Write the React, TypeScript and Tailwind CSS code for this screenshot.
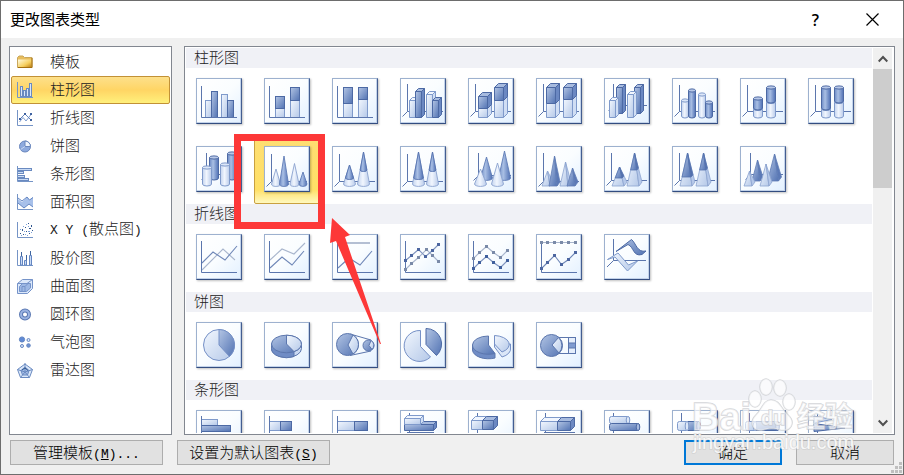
import { useState } from "react";
import type { ReactNode } from "react";

const LINE = "#5b76ad";
const DARK_LINE = "#4c69a4";
const GRAY = "#a9b6cd";

const fillOf = (dark?: boolean) => (dark ? "url(#dark)" : "url(#light)");
const strokeOf = (dark?: boolean) => (dark ? DARK_LINE : "#7f9acb");

// Shared gradients, referenced by every chart thumbnail
const Gradients = () => (
  <svg className="absolute h-0 w-0" aria-hidden="true">
    <defs>
      <linearGradient id="light" x1="0" y1="0" x2="1" y2="1">
        <stop offset="0" stopColor="#f2f7fe" />
        <stop offset="1" stopColor="#b4c8e8" />
      </linearGradient>
      <linearGradient id="dark" x1="0" y1="0" x2="1" y2="1">
        <stop offset="0" stopColor="#b3c5e4" />
        <stop offset="1" stopColor="#5273b3" />
      </linearGradient>
      <linearGradient id="lightRound" x1="0" y1="0" x2="1" y2="0">
        <stop offset="0" stopColor="#c3d3ee" />
        <stop offset="0.45" stopColor="#f1f6fe" />
        <stop offset="1" stopColor="#b9cbea" />
      </linearGradient>
      <linearGradient id="darkRound" x1="0" y1="0" x2="1" y2="0">
        <stop offset="0" stopColor="#6c8ac4" />
        <stop offset="0.4" stopColor="#a9bfe4" />
        <stop offset="1" stopColor="#4f70b4" />
      </linearGradient>
      <linearGradient id="folder" x1="0" y1="0" x2="1" y2="1">
        <stop offset="0" stopColor="#fffbe0" />
        <stop offset="0.6" stopColor="#f6cf5e" />
        <stop offset="1" stopColor="#b97a12" />
      </linearGradient>
    </defs>
  </svg>
);

const Axis = ({ top = 8, base = 39.5 }) => (
  <path d={`M5.5 ${top}V${base}H41`} stroke={LINE} fill="none" />
);

const Axis3D = ({ x = 7.5, top = 6, y = 33.5 }) => (
  <path
    d={`M${x} ${top}V${y}H43M${x} ${y}L${x - 5} ${y + 5}`}
    stroke={LINE}
    fill="none"
  />
);

type ShapeProps = {
  x: number;
  y: number;
  w: number;
  b?: number; // bottom edge
  dark?: boolean;
  split?: number;
};

const Bar = ({ x, y, w, b = 39.5, dark }: ShapeProps) => (
  <rect x={x} y={y} width={w} height={b - y} fill={fillOf(dark)} stroke={strokeOf(dark)} />
);

const Box = ({ x, y, w, b = 39.5, dark, split, d = 3 }: ShapeProps & { d?: number }) => {
  const r = x + w;
  if (split) {
    return (
      <>
        <Box x={x} y={split} w={w} b={b} d={d} />
        <Box x={x} y={y} w={w} b={split} d={d} dark />
      </>
    );
  }
  return (
    <g stroke={strokeOf(dark)} strokeLinejoin="round">
      <path d={`M${r} ${y}l${d} ${-d}V${b - d}L${r} ${b}z`} fill={dark ? "#6b88c2" : "#d0def4"} />
      <path d={`M${x} ${y}l${d} ${-d}h${w}l${-d} ${d}z`} fill={dark ? "#a7bbdf" : "#f1f6fe"} />
      <rect x={x} y={y} width={w} height={b - y} fill={fillOf(dark)} />
    </g>
  );
};

const Cylinder = ({ x, y, w, b = 38, dark, split }: ShapeProps) => {
  const r = w / 2;
  if (split) {
    return (
      <>
        <Cylinder x={x} y={split} w={w} b={b} />
        <Cylinder x={x} y={y} w={w} b={split - 1} dark />
      </>
    );
  }
  return (
    <g stroke={strokeOf(dark)}>
      <path
        d={`M${x} ${y}V${b}A${r} 2 0 0 0 ${x + w} ${b}V${y}`}
        fill={dark ? "url(#darkRound)" : "url(#lightRound)"}
      />
      <ellipse cx={x + r} cy={y} rx={r} ry="1.6" fill={dark ? "#b7c8e8" : "#dce7f8"} />
    </g>
  );
};

// x is the centre of the cone, w its width at the base
const Cone = ({ x, y, w, b = 38, dark, split }: ShapeProps) => {
  const r = w / 2;
  const s = split ? ((split - y) / (b - y)) * r : 0;
  return (
    <g stroke={dark ? "#5f7cb5" : "#8ba3cf"} strokeWidth="0.9" strokeLinejoin="round">
      <path
        d={`M${x} ${y}L${x - r} ${b}A${r} 2.4 0 0 0 ${x + r} ${b}z`}
        fill={dark ? "url(#darkRound)" : "url(#lightRound)"}
      />
      {split && (
        <path
          d={`M${x} ${y}L${x - s} ${split}A${s} 1.5 0 0 0 ${x + s} ${split}z`}
          fill="url(#darkRound)"
          stroke="#5673af"
        />
      )}
    </g>
  );
};

const Pyramid = ({ x, y, w, b = 40, dark, split }: ShapeProps) => {
  const r = w / 2;
  const s = split ? ((split - y) / (b - y)) * r : 0;
  return (
    <g stroke={dark ? "#5f7cb5" : "#8ba3cf"} strokeWidth="0.8" strokeLinejoin="round">
      <path d={`M${x} ${y}L${x - r} ${b}H${x + r - 3}z`} fill={fillOf(dark)} />
      <path d={`M${x} ${y}L${x + r - 3} ${b}L${x + r} ${b - 4}z`} fill={dark ? "#5b79b6" : "#b5c8e9"} />
      {split && (
        <g stroke="#5673af">
          <path d={`M${x} ${y}L${x - s} ${split}H${x + s * 0.6}z`} fill="url(#dark)" />
          <path d={`M${x} ${y}L${x + s * 0.6} ${split}L${x + s} ${split - 2}z`} fill="#5370ad" />
        </g>
      )}
    </g>
  );
};

const Trend = ({ points, color, marks }: { points: number[][]; color: string; marks?: string }) => (
  <>
    <polyline points={points.join(" ")} fill="none" stroke={color} strokeWidth="1.1" />
    {marks &&
      points.map(([x, y]) => (
        <rect key={x} x={x - 1.5} y={y - 1.5} width="3" height="3" fill={marks} />
      ))}
  </>
);

const Tube = ({ x, y, w, h, dark }: { x: number; y: number; w: number; h: number; dark?: boolean }) => (
  <g stroke={strokeOf(dark)}>
    <rect x={x} y={y} width={w} height={h} rx="2" fill={fillOf(dark)} />
    <ellipse cx={x + w - 1.5} cy={y + h / 2} rx="1.8" ry={h / 2} fill={dark ? "#a7bbe0" : "#dce7f8"} />
  </g>
);

type Chart = { name: string; art: ReactNode };

const columnCharts: Chart[] = [
  {
    name: "簇状柱形图",
    art: (
      <>
        <Bar x={9.5} y={22.5} w={6} />
        <Bar x={25.5} y={16.5} w={6} />
        <Bar x={15.5} y={13.5} w={6} dark />
        <Bar x={31.5} y={22.5} w={6} dark />
        <Axis />
      </>
    ),
  },
  {
    name: "堆积柱形图",
    art: (
      <>
        <Bar x={11.5} y={30.5} w={9} />
        <Bar x={11.5} y={18.5} w={9} b={30.5} dark />
        <Bar x={26.5} y={22.5} w={9} />
        <Bar x={26.5} y={9.5} w={9} b={22.5} dark />
        <Axis />
      </>
    ),
  },
  {
    name: "百分比堆积柱形图",
    art: (
      <>
        <Bar x={11.5} y={25.5} w={9} />
        <Bar x={11.5} y={9.5} w={9} b={25.5} dark />
        <Bar x={26.5} y={21.5} w={9} />
        <Bar x={26.5} y={9.5} w={9} b={21.5} dark />
        <Axis />
      </>
    ),
  },
  {
    name: "三维簇状柱形图",
    art: (
      <>
        <Axis3D />
        <Box x={9.5} y={22.5} w={6} />
        <Box x={15.5} y={13.5} w={6} dark />
        <Box x={26.5} y={16.5} w={6} />
        <Box x={32.5} y={22.5} w={6} dark />
      </>
    ),
  },
  {
    name: "三维堆积柱形图",
    art: (
      <>
        <Axis3D />
        <Box x={10.5} y={18.5} w={9} split={30.5} d={4} />
        <Box x={26.5} y={9.5} w={9} split={22.5} d={4} />
      </>
    ),
  },
  {
    name: "三维百分比堆积柱形图",
    art: (
      <>
        <Axis3D />
        <Box x={10.5} y={9.5} w={9} split={25.5} d={4} />
        <Box x={27.5} y={9.5} w={9} split={21.5} d={4} />
      </>
    ),
  },
  {
    name: "三维柱形图",
    art: (
      <>
        <Axis3D x={9.5} y={27.5} />
        <Box x={12.5} y={9.5} w={6} b={35.5} dark />
        <Box x={5.5} y={22.5} w={6} />
        <Box x={30.5} y={9.5} w={6} b={35.5} dark />
        <Box x={23.5} y={16.5} w={6} />
      </>
    ),
  },
  {
    name: "簇状圆柱图",
    art: (
      <>
        <Axis3D top={7} />
        <Cylinder x={9.5} y={22.5} w={7} />
        <Cylinder x={16.5} y={12.5} w={7} dark />
        <Cylinder x={26.5} y={16.5} w={7} />
        <Cylinder x={33.5} y={24.5} w={7} dark />
      </>
    ),
  },
  {
    name: "堆积圆柱图",
    art: (
      <>
        <Axis3D top={7} />
        <Cylinder x={13.5} y={20.5} w={9} split={31} />
        <Cylinder x={26.5} y={9.5} w={9} split={24} />
      </>
    ),
  },
  {
    name: "百分比堆积圆柱图",
    art: (
      <>
        <Axis3D top={7} />
        <Cylinder x={13.5} y={9.5} w={9} split={31} />
        <Cylinder x={26.5} y={9.5} w={9} split={24} />
      </>
    ),
  },
  {
    name: "三维圆柱图",
    art: (
      <>
        <Axis3D x={10.5} top={7} y={28.5} />
        <Cylinder x={13.5} y={11.5} w={9} b={32} dark />
        <Cylinder x={6.5} y={21.5} w={9} />
        <Cylinder x={31.5} y={7.5} w={9} b={32} dark />
        <Cylinder x={24.5} y={18.5} w={9} />
      </>
    ),
  },
  {
    name: "簇状圆锥图",
    art: (
      <>
        <Axis3D top={8} y={35.5} />
        <Cone x={12} y={23} w={9} />
        <Cone x={30.5} y={17.5} w={9} />
        <Cone x={20} y={10} w={9} dark />
        <Cone x={39} y={26} w={8} dark />
      </>
    ),
  },
  {
    name: "堆积圆锥图",
    art: (
      <>
        <Axis3D top={8} y={35.5} />
        <Cone x={17.5} y={19} w={12} split={32} />
        <Cone x={31.5} y={6} w={12} split={24} />
      </>
    ),
  },
  {
    name: "百分比堆积圆锥图",
    art: (
      <>
        <Axis3D top={8} y={35.5} />
        <Cone x={18.5} y={6} w={12} split={32} />
        <Cone x={32.5} y={6} w={12} split={24} />
      </>
    ),
  },
  {
    name: "三维圆锥图",
    art: (
      <>
        <Axis3D x={10.5} top={7} y={29.5} />
        <Cone x={18.5} y={11} w={12} b={32} dark />
        <Cone x={12.5} y={23} w={12} />
        <Cone x={36.5} y={5} w={12} b={32} dark />
        <Cone x={29.5} y={17} w={12} />
      </>
    ),
  },
  {
    name: "簇状棱锥图",
    art: (
      <>
        <Axis3D top={7} y={35.5} />
        <Pyramid x={11.5} y={25} w={11} />
        <Pyramid x={18.5} y={10} w={11} dark />
        <Pyramid x={29.5} y={16} w={11} />
        <Pyramid x={36.5} y={22} w={11} dark />
      </>
    ),
  },
  {
    name: "堆积棱锥图",
    art: (
      <>
        <Axis3D top={7} y={34.5} />
        <Pyramid x={15.5} y={21} w={15} split={32} />
        <Pyramid x={30.5} y={7} w={15} split={24} />
      </>
    ),
  },
  {
    name: "百分比堆积棱锥图",
    art: (
      <>
        <Axis3D top={7} y={34.5} />
        <Pyramid x={15.5} y={7} w={15} split={31} />
        <Pyramid x={31.5} y={7} w={15} split={24} />
      </>
    ),
  },
  {
    name: "三维棱锥图",
    art: (
      <>
        <Axis3D x={10.5} top={7} y={28.5} />
        <Pyramid x={17.5} y={14} w={11} b={35} dark />
        <Pyramid x={9.5} y={25} w={11} />
        <Pyramid x={34.5} y={8} w={14} b={35} dark />
        <Pyramid x={26} y={18} w={12} />
      </>
    ),
  },
];

const lineCharts: Chart[] = [
  {
    name: "折线图",
    art: (
      <>
        <Trend points={[[6, 36], [27, 15], [39, 26]]} color={GRAY} />
        <Trend points={[[6, 29], [17, 18], [29, 26], [41, 12]]} color="#7088b8" />
        <Axis top={7} base={38.5} />
      </>
    ),
  },
  {
    name: "堆积折线图",
    art: (
      <>
        <Trend points={[[6, 26], [18, 15], [30, 20], [41, 9]]} color={GRAY} />
        <Trend points={[[6, 34], [18, 23], [28, 31], [40, 17]]} color="#7088b8" />
        <Axis top={7} base={38.5} />
      </>
    ),
  },
  {
    name: "百分比堆积折线图",
    art: (
      <>
        <path d="M6 9H38" stroke="#b4bfd3" strokeWidth="2" />
        <Trend points={[[6, 34], [17, 24], [28, 31], [40, 17]]} color="#7088b8" />
        <Axis top={7} base={38.5} />
      </>
    ),
  },
  {
    name: "带数据标记的折线图",
    art: (
      <>
        <Axis top={7} base={38.5} />
        <Trend
          points={[[5.5, 35.5], [11.5, 29.5], [18.5, 23.5], [26.5, 15.5], [32.5, 21.5], [38.5, 27.5]]}
          color={GRAY}
          marks="#7a8aa8"
        />
        <Trend
          points={[[5.5, 26.5], [11.5, 21.5], [18.5, 15.5], [25.5, 22.5], [32.5, 16.5], [38.5, 10.5]]}
          color="#8095c0"
          marks="#4c66a0"
        />
      </>
    ),
  },
  {
    name: "带标记的堆积折线图",
    art: (
      <>
        <Axis top={7} base={38.5} />
        <Trend
          points={[[5.5, 24.5], [11.5, 18.5], [18.5, 12.5], [25.5, 18.5], [32.5, 23.5], [39.5, 16.5]]}
          color={GRAY}
          marks="#7a8aa8"
        />
        <Trend
          points={[[5.5, 34.5], [11.5, 28.5], [18.5, 22.5], [25.5, 28.5], [32.5, 33.5], [39.5, 26.5]]}
          color="#8095c0"
          marks="#3f5f9d"
        />
      </>
    ),
  },
  {
    name: "带数据标记的百分比堆积折线图",
    art: (
      <>
        <Axis top={7} base={38.5} />
        <Trend
          points={[[5.5, 8.5], [11.5, 8.5], [18.5, 8.5], [25.5, 8.5], [32.5, 8.5], [39.5, 8.5]]}
          color={GRAY}
          marks="#7a8aa8"
        />
        <Trend
          points={[[5.5, 34.5], [11.5, 28.5], [18.5, 21.5], [25.5, 30.5], [32.5, 25.5], [39.5, 18.5]]}
          color="#7088b8"
          marks="#4c66a0"
        />
      </>
    ),
  },
  {
    name: "三维折线图",
    art: (
      <>
        <path d="M9.5 5V26.5H42M9.5 26.5L3 33" stroke={LINE} fill="none" />
        <path
          d="M12 17.5L27.5 5.5C32 9 33 19 42 17L38 20.5C29 23 30 13 24 10.500Z"
          fill="url(#dark)"
          stroke={DARK_LINE}
        />
        <path d="M3.5 25.5L14 19L24.5 31L33.5 27L23.5 37L11 23Z" fill="url(#light)" stroke="#7f9acb" />
      </>
    ),
  },
];

const pieCharts: Chart[] = [
  {
    name: "饼图",
    art: (
      <g stroke="#7590c6">
        <circle cx="23" cy="23" r="15.5" fill="url(#light)" />
        <path d="M23 23V7.5A15.5 15.5 0 0 1 33.5 34.5Z" fill="url(#dark)" />
      </g>
    ),
  },
  {
    name: "三维饼图",
    art: (
      <g stroke={LINE}>
        <path d="M7.5 22V26.5A15 9 0 0 0 37.5 26.5V22Z" fill="#c9d9f2" />
        <path d="M7.5 22V26.5A15 9 0 0 0 30 34.5V30Z" fill="#6f8cc5" />
        <ellipse cx="22.5" cy="22" rx="15" ry="8.8" fill="url(#dark)" />
        <path d="M22.5 22V13.2A15 8.8 0 0 1 30 29.6Z" fill="url(#light)" />
      </g>
    ),
  },
  {
    name: "复合饼图",
    art: (
      <g stroke={LINE}>
        <path d="M18 12L39 18M18 33.5L39 29" />
        <circle cx="15.5" cy="22.5" r="11" fill="url(#dark)" />
        <path d="M16 23L21 13A11 11 0 0 1 21 32Z" fill="url(#light)" />
        <circle cx="36.5" cy="23.5" r="5.5" fill="url(#dark)" />
        <path d="M37 23.5L39 18.5A5.5 5.5 0 0 1 40 27.5Z" fill="url(#light)" />
      </g>
    ),
  },
  {
    name: "分离型饼图",
    art: (
      <g stroke="#7590c6">
        <path d="M20.5 24.5V8.5A15.5 15.5 0 1 0 30.5 35Z" fill="url(#light)" />
        <path d="M26 22.5V6.5A15.5 15.5 0 0 1 36.5 33.5Z" fill="url(#dark)" stroke={DARK_LINE} />
      </g>
    ),
  },
  {
    name: "分离型三维饼图",
    art: (
      <g stroke={LINE} strokeLinejoin="round">
        <path d="M4.5 23V28A16 9 0 0 0 27 36V31.5Z" fill="#6f8cc5" />
        <path d="M20.5 23V14A16 9 0 0 0 4.5 23A16 9 0 0 0 27 31.5Z" fill="url(#dark)" />
        <g stroke="#7590c6">
          <path d="M26.5 22V25L34 35A16 9 0 0 0 42.5 26V22Z" fill="#dbe7f8" />
          <path d="M26.5 22V13.5A16 9 0 0 1 34 30Z" fill="url(#light)" />
        </g>
      </g>
    ),
  },
  {
    name: "复合条饼图",
    art: (
      <g stroke={LINE}>
        <path d="M20 15.5H33M20 31.5H33" />
        <circle cx="15.5" cy="23.5" r="11" fill="url(#dark)" />
        <path d="M16 23L22.5 15.5A11 11 0 0 1 23 31Z" fill="url(#light)" />
        <rect x="32.5" y="15.5" width="7" height="16" fill="#e5eefb" />
        <rect x="32.5" y="21" width="7" height="5" fill="#7f9bd0" />
      </g>
    ),
  },
];

const barCharts: Chart[] = [
  {
    name: "簇状条形图",
    art: (
      <>
        <Bar x={5.5} y={9.5} w={16} b={15.5} />
        <Bar x={5.5} y={15.5} w={29} b={21.5} dark />
        <path d="M5.5 6V40" stroke={LINE} />
      </>
    ),
  },
  {
    name: "堆积条形图",
    art: (
      <>
        <Bar x={5.5} y={11.5} w={11} b={20.5} />
        <Bar x={16.5} y={11.5} w={11} b={20.5} dark />
        <path d="M5.5 6V40" stroke={LINE} />
      </>
    ),
  },
  {
    name: "百分比堆积条形图",
    art: (
      <>
        <Bar x={5.5} y={11.5} w={17} b={20.5} />
        <Bar x={22.5} y={11.5} w={13} b={20.5} dark />
        <path d="M5.5 6V40" stroke={LINE} />
      </>
    ),
  },
  {
    name: "三维簇状条形图",
    art: (
      <>
        <path d="M9.5 3V40M7 22.5H34" stroke={LINE} />
        <Box x={4.5} y={14.5} w={29} b={20.5} dark />
        <Box x={4.5} y={8.5} w={16} b={14.5} />
      </>
    ),
  },
  {
    name: "三维堆积条形图",
    art: (
      <>
        <path d="M9.5 3V40" stroke={LINE} />
        <Box x={3.5} y={10.5} w={11} b={19.5} d={4} />
        <Box x={14.5} y={10.5} w={11} b={19.5} d={4} dark />
      </>
    ),
  },
  {
    name: "三维百分比堆积条形图",
    art: (
      <>
        <path d="M9.5 3V40M8 22.5H39" stroke={LINE} />
        <Box x={4.5} y={11.5} w={17} b={20.5} d={4} />
        <Box x={21.5} y={11.5} w={13} b={20.5} d={4} dark />
      </>
    ),
  },
  {
    name: "簇状水平圆柱图",
    art: (
      <>
        <path d="M9.5 3V40" stroke={LINE} />
        <Tube x={5.5} y={6.5} w={20} h={7} />
        <Tube x={5.5} y={13.5} w={30} h={7} dark />
      </>
    ),
  },
  {
    name: "堆积水平圆柱图",
    art: (
      <>
        <path d="M9.5 3V40" stroke={LINE} />
        <Tube x={14} y={11.5} w={14} h={9} dark />
        <Tube x={5.5} y={11.5} w={11} h={9} />
      </>
    ),
  },
  {
    name: "百分比堆积水平圆柱图",
    art: (
      <>
        <path d="M9.5 3V40" stroke={LINE} />
        <Tube x={14} y={11.5} w={25} h={9} dark />
        <Tube x={5.5} y={11.5} w={11} h={9} />
      </>
    ),
  },
  {
    name: "簇状水平圆锥图",
    art: (
      <>
        <path d="M9.5 3V40" stroke={LINE} />
        <path d="M6 6L24 9.5L6 13Z" fill="url(#light)" stroke="#7f9acb" />
        <path d="M6 13.5L37 18L6 21.5Z" fill="url(#dark)" stroke={DARK_LINE} />
      </>
    ),
  },
];

const sections = [
  { title: "柱形图", charts: columnCharts },
  { title: "折线图", charts: lineCharts },
  { title: "饼图", charts: pieCharts },
  { title: "条形图", charts: barCharts },
];

const frame = <path d="M.5 0V15.5H16" stroke="#7594c6" fill="none" />;

const categories: Chart[] = [
  {
    name: "模板",
    art: (
      <>
        <path d="M.5 13.5V3.5L2 2H6L7.5 3.5H15V13.5Z" fill="#e8bd5d" stroke="#c9a75c" />
        <path d="M1 5.5H14.5V13.5H1Z" fill="url(#folder)" />
        <path d="M1 13.5H15V4" stroke="#a5700f" fill="none" />
      </>
    ),
  },
  {
    name: "柱形图",
    art: (
      <g fill="#d9e6fa" stroke="#6a8ac0">
        <rect x="3.5" y="4.5" width="2" height="10" />
        <rect x="6.5" y="8.5" width="2" height="6" />
        <rect x="9.5" y="6.5" width="2" height="8" />
        <rect x="12.5" y="1.5" width="2" height="13" />
        {frame}
      </g>
    ),
  },
  {
    name: "折线图",
    art: (
      <>
        {frame}
        <path d="M2.5 12L6 7.5L9 11L14 4.5" stroke="#7c9bd0" fill="none" />
        <path d="M3 9L8 4L14 10" stroke="#6384bd" fill="none" />
        <path d="M2 8h2v2H2zM7 3h2v2H7zM13 9h2v2h-2zM13 3h2v2h-2z" fill="#3f62a0" />
      </>
    ),
  },
  {
    name: "饼图",
    art: (
      <g stroke="#6a87bd">
        <circle cx="8" cy="8.5" r="5.5" fill="#8eaade" />
        <path d="M8 8.5V3A5.5 5.5 0 0 1 13.5 8.5Z" fill="#f0f5fd" />
        <path d="M8 8.5L3.5 11.5" stroke="#c7d7f2" />
      </g>
    ),
  },
  {
    name: "条形图",
    art: (
      <g fill="#c9dbf5" stroke="#6a8ac0">
        <rect x=".5" y="2.5" width="14" height="2" />
        <rect x=".5" y="5.5" width="6" height="2" />
        <rect x=".5" y="9.5" width="7" height="2" />
        <rect x=".5" y="12.5" width="11" height="2" />
        {frame}
      </g>
    ),
  },
  {
    name: "面积图",
    art: (
      <>
        <path d="M1 5L5 8L10 3L12.5 6L16 3V13L12 10L7 14L1 9Z" fill="#a7c0ea" />
        <path d="M1 4L5 7L10 3L12.5 6L16 3.5M1 9L7 14L12 10L16 13" stroke="#6486c2" fill="none" />
        {frame}
      </>
    ),
  },
  {
    name: "X Y（散点图）",
    art: (
      <>
        {frame}
        <path
          d="M3 11h1v1H3zM5 7h1v2H5zM8 5h1v1H8zM11 1h1v1h-1zM14 3h1v2h-1zM12 6h2v1h-2zM9 9h1v1H9zM6 12h1v1H6zM12 11h1v1h-1zM15 8h1v1h-1z"
          fill="#2f568f"
        />
        <path
          d="M3 7h1v1H3zM6 4h1v1H6zM4 13h1v1H4zM8 12h1v1H8zM7 9h1v1H7zM11 4h1v1h-1zM11 9h2v1h-2zM14 10h1v1h-1zM10 13h1v1h-1zM9 2h1v1H9z"
          fill="#7da2dc"
        />
      </>
    ),
  },
  {
    name: "股价图",
    art: (
      <>
        {frame}
        <path d="M4.5 2V13M9.5 5V13M13.5 1V13" stroke="#3f66a0" />
        <g fill="#c9dbf5" stroke="#6486c2">
          <path d="M3.5 6.5h2V15h-2zM7.5 10.5h2V15h-2zM12.5 5.5h2V15h-2z" />
        </g>
      </>
    ),
  },
  {
    name: "曲面图",
    art: (
      <g stroke="#7593c9">
        <path d="M.5 5.5L5.5 1.5H15.5V10.5L10.5 15.5H.5Z" fill="#dbe8fa" />
        <path d="M2.5 8.5L5.5 5.5H13.5V10L9.5 13.5H2.5Z" fill="#9db8e4" />
        <path d="M5 13V8.5H8V13M8 8.5L11 5.5M.5 5.5L10 5.5L15.5 1.5" fill="none" />
      </g>
    ),
  },
  {
    name: "圆环图",
    art: (
      <>
        <circle cx="8" cy="8.5" r="4" stroke="#5a78b2" strokeWidth="4" fill="none" />
        <circle cx="8" cy="8.5" r="4" stroke="#9ab3e2" strokeWidth="2" fill="none" />
      </>
    ),
  },
  {
    name: "气泡图",
    art: (
      <g stroke="#6486c2">
        <circle cx="5" cy="5.5" r="2.6" fill="#5f8ad6" />
        <circle cx="11.5" cy="6" r="1.5" fill="#dbe8fa" />
        <circle cx="5" cy="12" r="1.5" fill="#dbe8fa" />
        <circle cx="11.5" cy="11.5" r="1.8" fill="#6f92d2" />
      </g>
    ),
  },
  {
    name: "雷达图",
    art: (
      <g stroke="#6a8ac0" fill="none">
        <path d="M8 2L15.5 7.5L12.5 15.5H3.5L.5 7.5Z" fill="#dbe8fa" />
        <path d="M8 5L12 8.5L10.5 13H5.5L4 8.5Z" fill="#a5bde6" />
        <path d="M8 1V10L15.5 7.5M8 10L.5 7.5M8 10L3.5 15.5M8 10L12.5 15.5" />
        <path d="M5 8L8 6L11 8.5" stroke="#2f568f" />
      </g>
    ),
  },
];

// Half-width characters keep the fixed pitch of the system font
const Label = ({ text }: { text: string }) =>
  text.startsWith("X Y") ? (
    <>
      <span className="font-['Liberation_Mono'] text-[13px]">X Y (</span>散点图
      <span className="font-['Liberation_Mono'] text-[13px]">)</span>
    </>
  ) : (
    <>{text}</>
  );

const buttonStyle =
  "h-[25px] border border-[#adadad] bg-[#e1e1e1] text-[15px] leading-none text-black";

const Key = ({ letter, after = "" }: { letter: string; after?: string }) => (
  <span className="font-['Liberation_Mono'] text-[13px]">
    (<u>{letter}</u>){after}
  </span>
);

const Watermark = () => (
  <svg
    className="pointer-events-none absolute right-[43px] bottom-[14px]"
    width="170"
    height="84"
    viewBox="690 376 170 84"
    aria-hidden="true"
  >
    <g
      fill="#fff"
      fillOpacity="0.65"
      stroke="#c6c8cc"
      strokeOpacity="0.75"
      strokeWidth="1.5"
      fontWeight="bold"
      paintOrder="stroke"
    >
      <text x="692" y="430" fontSize="38" fontFamily="Liberation Sans, sans-serif">
        Bai
      </text>
      <ellipse cx="755" cy="399" rx="6" ry="8" />
      <ellipse cx="766" cy="387" rx="6" ry="8" />
      <ellipse cx="780" cy="388" rx="6" ry="8" />
      <ellipse cx="789" cy="402" rx="6" ry="8" />
      <path d="M771 400C780 400 781 409 788 415C796 422 791 432 781 430C774 428 769 428 763 430C752 432 749 422 756 415C762 410 763 400 771 400Z" />
      <text x="761" y="425" fontSize="20" fontFamily="Liberation Sans, sans-serif">
        du
      </text>
      <text x="797" y="427" fontSize="28" fontFamily="Noto Sans CJK SC, sans-serif">
        经验
      </text>
    </g>
    <text
      x="693"
      y="449"
      fontSize="20"
      fontFamily="Liberation Sans, sans-serif"
      fill="#fff"
      fillOpacity="0.85"
      stroke="#c4c4c4"
      strokeOpacity="0.5"
      strokeWidth="1.5"
      paintOrder="stroke"
    >
      jingyan.baidu.com
    </text>
  </svg>
);

export default function App() {
  const [category, setCategory] = useState("柱形图");
  const [chart, setChart] = useState("簇状圆锥图");

  return (
    <div className="relative flex h-screen flex-col overflow-hidden border border-[#6d6d6d] bg-[#f0f0f0] font-['Liberation_Sans','Noto_Sans_CJK_SC',sans-serif]">
      <Gradients />
      <header className="flex h-[37px] shrink-0 items-center bg-white pr-0.5 pl-[9px] text-black">
        <h1 className="flex-1 text-[15px] leading-5">更改图表类型</h1>
        <button className="w-[57px] font-['Open_Sans'] text-base font-semibold" aria-label="帮助">
          ?
        </button>
        <button className="flex w-[57px] justify-center" aria-label="关闭">
          <svg width="13" height="13" viewBox="0 0 13 13" stroke="#000" strokeWidth="1.2">
            <path d="M.5 .5L12.5 12.5M12.5 .5L.5 12.5" />
          </svg>
        </button>
      </header>

      <main className="flex min-h-0 flex-1 gap-3 px-2 pt-2">
        <nav className="w-[163px] shrink-0 border border-[#828790] bg-white px-px pt-px text-[15px] font-light text-[#222]">
          {categories.map((el) => (
            <button
              key={el.name}
              onClick={() => setCategory(el.name)}
              className={
                el.name === category
                  ? "flex h-7 w-full items-center gap-[17px] rounded-xs border border-[#c29136] bg-linear-to-b from-[#fde08a] via-[#ffd564] to-[#fff07c] pl-[5px]"
                  : "flex h-7 w-full items-center gap-[17px] border border-transparent pl-[5px]"
              }
            >
              <svg width="16" height="16" viewBox="0 0 16 16" className="shrink-0" aria-hidden="true">
                {el.art}
              </svg>
              <span className="whitespace-nowrap leading-5">
                <Label text={el.name} />
              </span>
            </button>
          ))}
        </nav>

        <div className="flex min-w-0 flex-1 border border-[#828790] bg-white p-px">
          <div className="min-w-0 flex-1 overflow-y-auto [scrollbar-width:none]">
            {sections.map((section) => (
              <section key={section.title}>
                <h2 className="h-5 bg-[#f0f1f6] pl-2 text-[15px] leading-5 font-light text-[#222]">
                  {section.title}
                </h2>
                <div className="flex flex-wrap">
                  {section.charts.map((el) => (
                    <div
                      key={el.name}
                      className={
                        el.name === chart
                          ? "h-[68px] w-[68px] rounded-xs border border-[#c9a040] bg-linear-to-b from-[#fede72] via-[#ffe066] via-80% to-[#fff9bd] px-[9px] pt-[9px]"
                          : "h-[68px] w-[68px] px-[10px] pt-[10px]"
                      }
                    >
                      <button
                        aria-label={el.name}
                        onClick={() => setChart(el.name)}
                        className="block h-[46px] w-[46px] border border-t-[#9db1cf] border-r-[#435d90] border-b-[#334d80] border-l-[#9db1cf] bg-linear-to-br from-white via-[#fafdff] to-[#e2f0ff] shadow-[1px_1px_2px_rgba(0,0,0,0.25),inset_-1px_-1px_0_#c3d3ea]"
                      >
                        <svg width="44" height="44" viewBox="1 1 44 44" aria-hidden="true">
                          {el.art}
                        </svg>
                      </button>
                    </div>
                  ))}
                </div>
              </section>
            ))}
          </div>
          <div className="mx-px flex w-[19px] shrink-0 flex-col bg-[#f0f0f0]">
            <button className="flex h-[21px] items-center justify-center" aria-label="向上滚动">
              <svg width="10" height="8" viewBox="0 0 10 8" fill="none" stroke="#505050" strokeWidth="2">
                <path d="M.7 6.5L5 2L9.3 6.5" />
              </svg>
            </button>
            <div className="h-[119px] bg-[#cdcdcd]" />
            <button className="mt-auto flex h-[21px] items-center justify-center" aria-label="向下滚动">
              <svg width="10" height="8" viewBox="0 0 10 8" fill="none" stroke="#505050" strokeWidth="2">
                <path d="M.7 1.5L5 6L9.3 1.5" />
              </svg>
            </button>
          </div>
        </div>
      </main>

      <footer className="flex shrink-0 gap-[14px] px-[9px] pt-[5px] pb-[9px] font-light">
        <button className={`${buttonStyle} w-[153px]`}>
          管理模板
          <Key letter="M" after="..." />
        </button>
        <button className={`${buttonStyle} w-[153px]`}>
          设置为默认图表
          <Key letter="S" />
        </button>
        <button className="ml-auto h-[25px] w-[98px] border-2 border-[#0078d7] bg-[#e1e1e1] text-[15px] leading-none text-black">
          确定
        </button>
        <button className={`${buttonStyle} w-[98px]`}>取消</button>
      </footer>

      {/* size grip */}
      <svg className="absolute right-0 bottom-0" width="12" height="12" viewBox="0 0 12 12" fill="#bfbfbf" aria-hidden="true">
        <path d="M8 0h3v3H8zM8 4h3v3H8zM8 8h3v3H8zM4 4h3v3H4zM4 8h3v3H4zM0 8h3v3H0z" />
      </svg>

      <Watermark />

      {/* highlight frame and arrow on the chosen chart */}
      <div className="pointer-events-none absolute top-[133px] left-[233px] h-[95px] w-[91px] border-[7px] border-[#fd3838]" />
      <svg
        className="pointer-events-none absolute top-[217px] left-[329px]"
        width="52"
        height="128"
        viewBox="330 218 52 128"
        aria-hidden="true"
      >
        <path d="M332 218L350 235L345 237L381 344L380 344L336 241L330 243Z" fill="#fd3838" />
      </svg>
    </div>
  );
}
